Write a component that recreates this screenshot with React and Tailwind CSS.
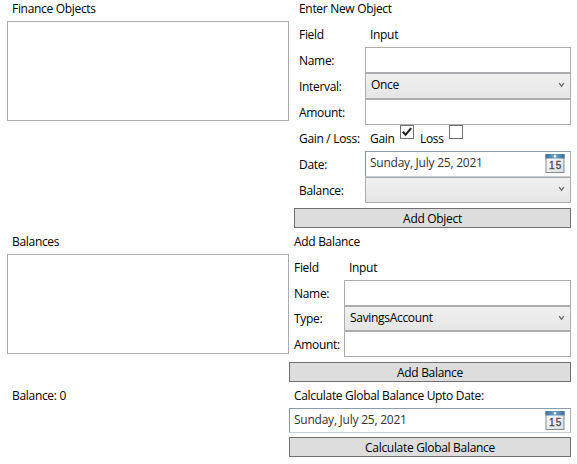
function Caption({ children, className = "" }) {
  return <div className={`flex items-center whitespace-nowrap ${className}`}>{children}</div>;
}

function Chevron() {
  return (
    <svg width="7" height="6" viewBox="0 0 7 6" className="mr-[5px] mb-[2px]">
      <path d="M1.2 1.2 L3.5 4.3 L5.8 1.2" fill="none" stroke="#606060" strokeWidth="1.25" />
    </svg>
  );
}

function TextInput({ className = "" }) {
  return <div className={`border border-[#abadb3] bg-white ${className}`} />;
}

function Combo({ children, className = "" }) {
  return (
    <div
      className={`flex items-center justify-between border border-[#acacac] bg-linear-to-b from-[#f0f0f0] to-[#e5e5e5] pl-[5px] ${className}`}
    >
      <span className="pb-[2px]">{children}</span>
      <Chevron />
    </div>
  );
}

function CalendarIcon() {
  return (
    <svg width="20" height="19" viewBox="0 0 20 19" className="mt-[2px] self-start">
      <defs>
        <linearGradient id="page" x1="0" y1="0" x2="1" y2="1">
          <stop offset="0" stopColor="#ffffff" />
          <stop offset="1" stopColor="#d9dde0" />
        </linearGradient>
        <linearGradient id="band" x1="0" y1="0" x2="1" y2="0">
          <stop offset="0" stopColor="#3d7099" />
          <stop offset="0.5" stopColor="#6ea3ca" />
          <stop offset="1" stopColor="#3d7099" />
        </linearGradient>
      </defs>
      <rect x="1" y="1" width="18" height="17.5" fill="url(#page)" stroke="#858b90" />
      <rect x="0.5" y="0" width="19" height="4.5" fill="url(#band)" />
      <circle cx="10" cy="2.3" r="1.2" fill="#fff" />
      <text
        x="10"
        y="15"
        textAnchor="middle"
        textLength="12"
        lengthAdjust="spacing"
        fontFamily="Liberation Sans, sans-serif"
        fontSize="10"
        stroke="#484848"
        strokeWidth="0.3"
        fill="#484848"
      >
        15
      </text>
    </svg>
  );
}

function DatePicker({ className = "" }) {
  return (
    <div
      className={`flex items-center justify-between border border-t-[#8c9caf] border-r-[#a4b0be] border-b-[#c5ced8] border-l-[#8296ab] bg-white pr-[5px] pl-1 text-[#333] ${className}`}
    >
      <span className="pb-[2px] tracking-[-0.24px]">Sunday, July 25, 2021</span>
      <CalendarIcon />
    </div>
  );
}

function Button({ children, className = "" }) {
  return (
    <button
      className={`flex h-5 items-center justify-center border border-[#707070] bg-[#dddddd] pt-[2px] ${className}`}
    >
      {children}
    </button>
  );
}

function Checkbox({ checked }) {
  return (
    <span className="mb-[12px] flex size-[14px] border border-[#707070] bg-white">
      {checked && (
        <svg width="12" height="12" viewBox="0 0 12 12">
          <path d="M1.7 5.7 L4.6 8.6 L10.2 2.1" fill="none" stroke="#212121" strokeWidth="2.1" />
        </svg>
      )}
    </span>
  );
}

export default function App() {
  return (
    <div className="h-[464px] w-[577px] overflow-hidden bg-white pr-1.5 pl-[7px] font-['Open_Sans','Noto_Sans',sans-serif] text-[12px] leading-4 tracking-[-0.31px] text-black">
      <section className="grid h-[233px] grid-cols-[282px_282px]">
        <div>
          <Caption className="h-[21px] pb-[3px] pl-[5px]">Finance Objects</Caption>
          <div className="h-[100px] border border-[#abadb3]" />
        </div>
        <div className="pl-[5px]">
          <Caption className="h-[21px] pb-[3px] pl-[5px]">Enter New Object</Caption>
          <div className="grid grid-cols-[71px_206px] grid-rows-[repeat(7,26px)]">
            <Caption className="pt-[2px] pl-[5px]">Field</Caption>
            <Caption className="pt-[2px] pl-[5px]">Input</Caption>
            <Caption className="pt-[2px] pl-[5px]">Name:</Caption>
            <TextInput />
            <Caption className="pt-[2px] pl-[5px]">Interval:</Caption>
            <Combo>Once</Combo>
            <Caption className="pt-[2px] pl-[5px]">Amount:</Caption>
            <TextInput />
            <Caption className="pt-[2px] pl-[5px]">Gain / Loss:</Caption>
            <div className="flex items-center pl-[5px]">
              <span className="w-[30px] pt-[2px]">Gain</span>
              <Checkbox checked />
              <span className="ml-[6px] w-[29px] pt-[2px]">Loss</span>
              <Checkbox />
            </div>
            <Caption className="pt-[2px] pl-[5px]">Date:</Caption>
            <DatePicker />
            <Caption className="pt-[2px] pl-[5px]">Balance:</Caption>
            <Combo />
          </div>
          <Button className="mt-[5px] w-full">Add Object</Button>
        </div>
      </section>

      <section className="grid h-[149px] grid-cols-[282px_282px]">
        <div>
          <Caption className="h-[21px] pb-[3px] pl-[5px]">Balances</Caption>
          <div className="h-[100px] border border-[#abadb3]" />
        </div>
        <div>
          <Caption className="h-[21px] pb-[3px] pl-[5px]">Add Balance</Caption>
          <div className="grid grid-cols-[55px_227px] grid-rows-[26px_26px_25px_26px]">
            <Caption className="pt-[2px] pl-[5px]">Field</Caption>
            <Caption className="pt-[2px] pl-[5px]">Input</Caption>
            <Caption className="pt-[2px] pl-[5px]">Name:</Caption>
            <TextInput />
            <Caption className="pt-px pl-[5px]">Type:</Caption>
            <Combo>SavingsAccount</Combo>
            <Caption className="pt-[2px] pl-[5px]">Amount:</Caption>
            <TextInput />
          </div>
          <Button className="mt-[5px] w-full">Add Balance</Button>
        </div>
      </section>

      <section className="grid grid-cols-[282px_282px]">
        <Caption className="h-[26px] pt-[2px] pl-[5px]">Balance: 0</Caption>
        <div>
          <Caption className="h-[26px] pt-[2px] pl-[5px]">Calculate Global Balance Upto Date:</Caption>
          <DatePicker className="h-[25px]" />
          <Button className="mt-1 w-full">Calculate Global Balance</Button>
        </div>
      </section>
    </div>
  );
}
